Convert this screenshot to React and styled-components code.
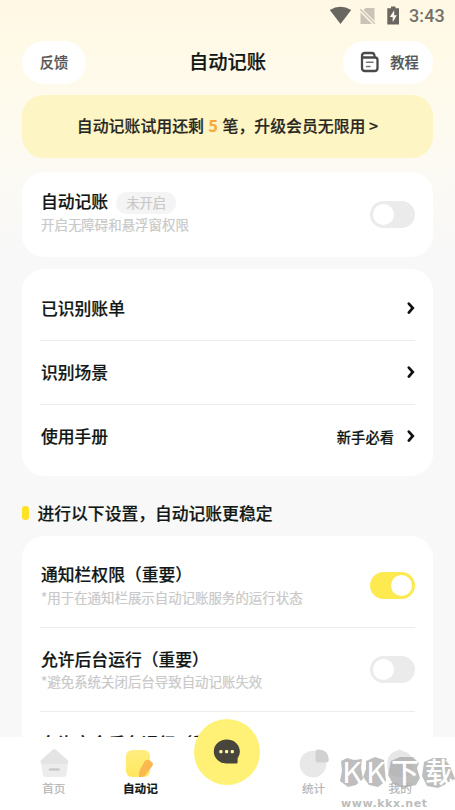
import React from "react";
import styled, { createGlobalStyle } from "styled-components";

const Colors = {
  background: "#f8f8f8",
  text: "#111714",
  muted: "#c9c9c9",
  divider: "#ececec",
  yellow: "#fdea50",
  switchOff: "#ebebeb"
};

const GlobalStyle = createGlobalStyle`
  * {
    box-sizing: border-box;
  }
  body {
    margin: 0;
    font-family: "Noto Sans CJK SC", "Noto Sans", sans-serif;
    color: ${Colors.text};
    -webkit-text-stroke: 0.2px currentColor;
  }
`;

const Screen = styled.div`
  position: relative;
  display: flex;
  flex-direction: column;
  width: 455px;
  height: 810px;
  overflow: hidden;
  background: linear-gradient(#fff8e4 0, #fffaea 75px, #fcfaf3 165px, ${Colors.background} 255px);
`;

const StatusBar = styled.div`
  display: flex;
  align-items: center;
  justify-content: flex-end;
  flex: none;
  height: 31px;
  padding-right: 10px;
`;
const Clock = styled.span`
  margin-left: 8px;
  font: 500 18px/30px Roboto, sans-serif;
  letter-spacing: 0.15px;
  color: #74716b;
  -webkit-text-stroke: 0;
`;

const Header = styled.header`
  display: grid;
  grid-template-columns: 1fr auto 1fr;
  align-items: center;
  flex: none;
  height: 43px;
  margin: 10px 22px 11px;
`;
const HeaderTitle = styled.h1`
  margin: 0;
  font-size: 19.3px;
  font-weight: 500;
  line-height: 38px;
  padding-bottom: 4px;
`;
const PillButton = styled.button`
  display: flex;
  align-items: center;
  justify-content: center;
  justify-self: ${props => props.$align};
  gap: 10px;
  width: ${props => props.$width}px;
  height: 43px;
  padding: 0 0 1px ${props => props.$indent || 0}px;
  border: 0;
  border-radius: 22px;
  background: #fff;
  color: #555;
  font: 500 14.3px/20px "Noto Sans CJK SC", sans-serif;
`;

const Content = styled.main`
  display: flex;
  flex-direction: column;
  flex: 1;
  min-height: 0;
  overflow: hidden;
  padding: 0 22px;
`;
const Banner = styled.div`
  flex: none;
  height: 63px;
  border-radius: 21px;
  background: #fef5c5;
  color: #29271e;
  text-align: center;
  white-space: nowrap;
  font-size: 15.9px;
  font-weight: 500;
  line-height: 62px;
`;
const Count = styled.span`
  margin: 0 1px;
  font-weight: 700;
  color: #f6ab3c;
`;

const Card = styled.section`
  flex: none;
  margin-top: ${props => props.$top}px;
  padding: ${props => props.$padding || "7px 18px 8px"};
  border-radius: 22px;
  background: #fff;
`;
const Row = styled.div`
  display: flex;
  align-items: center;
  justify-content: space-between;
  height: ${props => props.$height}px;
  & + & {
    border-top: 1px solid ${Colors.divider};
  }
`;
const RowText = styled.div`
  display: flex;
  flex-direction: column;
  padding: 0 0 ${props => props.$lift || 0}px 1px;
`;
const RowTitle = styled.div`
  display: flex;
  align-items: center;
  gap: 8px;
  height: 25px;
  font-size: 16.8px;
  font-weight: 500;
  white-space: nowrap;
`;
const RowHint = styled.div`
  font-size: 13.45px;
  line-height: 20px;
  color: ${Colors.muted};
  white-space: nowrap;
`;
const Badge = styled.span`
  width: 60px;
  margin-top: 3px;
  border-radius: 11px;
  background: #f4f4f4;
  color: ${Colors.muted};
  font-size: 13.3px;
  font-weight: 400;
  line-height: 22px;
  text-align: center;
`;
const RowEnd = styled.div`
  display: flex;
  align-items: center;
  gap: 12px;
  padding-bottom: 1px;
  font-size: 14.3px;
  font-weight: 500;
`;
const Track = styled.div`
  display: flex;
  align-items: center;
  justify-content: ${props => (props.$on ? "flex-end" : "flex-start")};
  width: 45px;
  height: 27px;
  padding: 0 3px;
  border-radius: 14px;
  background: ${props => (props.$on ? Colors.yellow : Colors.switchOff)};
`;
const Thumb = styled.div`
  width: 21px;
  height: 21px;
  border-radius: 50%;
  background: #fff;
`;

const SectionTitle = styled.h2`
  display: flex;
  align-items: center;
  flex: none;
  gap: 8.5px;
  height: 24px;
  margin: 25px 0 0;
  font-size: 16.8px;
  font-weight: 500;
  white-space: nowrap;
  &::before {
    content: "";
    width: 7px;
    height: 14px;
    border-radius: 3px;
    background: #fee228;
  }
`;

const TabBar = styled.nav`
  display: grid;
  grid-template-columns: repeat(5, 86.6px);
  justify-content: center;
  flex: none;
  height: 73px;
  padding-right: 1px;
  background: #fff;
`;
const Tab = styled.div`
  display: flex;
  flex-direction: column;
  align-items: center;
  padding-top: 10px;
  font-size: 11.6px;
  line-height: 18px;
  font-weight: ${props => (props.$active ? 700 : 400)};
  color: ${props => (props.$active ? Colors.text : "#b5b5b5")};
`;
const TabIcon = styled.svg`
  width: 32px;
  height: 32px;
`;
const ChatButton = styled.div`
  display: flex;
  align-items: center;
  justify-content: center;
  justify-self: center;
  width: 66px;
  height: 66px;
  margin-top: -18px;
  border-radius: 50%;
  background: #fff176;
`;

const Watermark = styled.svg`
  position: absolute;
  right: 0;
  bottom: 0;
  -webkit-text-stroke: 0;
`;

const Switch = ({ on }) => (
  <Track $on={on}>
    <Thumb />
  </Track>
);

const Chevron = () => (
  <svg width="9" height="14" viewBox="0 0 9 14" fill="none">
    <path d="M2.8 2.6 6.8 7 2.8 11.6" stroke="#111" strokeWidth="2.7" strokeLinecap="round" />
  </svg>
);

const StatusIcons = () => (
  <svg width="72" height="22" viewBox="330 4 72 22">
    <path d="M330.8 9.1Q341.5 2.4 352.2 9.1L341.5 23Z" fill="#696660" />
    <path d="M366.5 7H375.5V20L364.6 9ZM361.5 11.5 373 23H361.5Z" fill="#c9c4b7" />
    <path d="M361.3 8.2 375.8 22.8" stroke="#c9c4b7" strokeWidth="1.5" />
    <path d="M392 5.5H396.5V7.3H400V23.6H388.3V7.3H392Z" fill="#696660" />
    <path d="M395.2 9.2 390.8 16H393.7V21.2L397.8 14.3H395.2Z" fill="#fff9e7" />
  </svg>
);

const GuideIcon = () => (
  <svg width="20" height="22" viewBox="0 0 20 22" fill="none" stroke="#4a4a4a" strokeLinecap="round">
    <path d="M2 5V17Q2 20 5 20H14.5Q17.5 20 17.5 17V9Q17.5 6.5 15 6.5H4.5Q2 6.5 2 4.5Q2 2 5 2H12Q14 2 14.5 4.5L15 6.5" strokeWidth="2.3" />
    <path d="M6.5 11.2H13M6.5 15.5H10" strokeWidth="1.6" stroke="#777" />
  </svg>
);

const HomeIcon = () => (
  <TabIcon viewBox="0 0 32 32">
    <path d="M3 16H30L28.6 27Q28.2 30 25.5 30H8Q5 30 4.6 27Z" fill="#ececec" />
    <path d="M14.3 3Q16.2 1.4 18.2 3L29.5 13Q31.5 15.5 28 17H4.8Q1 15.5 3.2 13Z" fill="#e4e4e4" />
    <path d="M12 22.5H20.5" stroke="#c9c9c9" strokeWidth="2.5" strokeLinecap="round" />
  </TabIcon>
);

const RecordIcon = () => (
  <TabIcon viewBox="0 0 32 32">
    <rect x="2" y="3" width="24" height="27" rx="6" fill="url(#note)" />
    <path d="M20.5 14.5Q22.5 11.5 25.5 13.3L27.5 14.8Q30 16.8 28 19.5L21 28.5Q19.5 30 15 30Q15 26 15.6 23.5Z" fill="#fcb850" />
    <defs>
      <linearGradient id="note" x2="0" y2="1">
        <stop stopColor="#ffee80" />
        <stop offset="1" stopColor="#ffe85e" />
      </linearGradient>
    </defs>
  </TabIcon>
);

const StatsIcon = () => (
  <TabIcon viewBox="0 0 32 32">
    <circle cx="15" cy="17" r="13.3" fill="#e8e8e8" />
    <path d="M17.5 5Q17.5 2.2 20.5 2.5Q30.5 3 30.8 12.5Q30.8 15.5 28 15.5H20Q17.5 15.5 17.5 13Z" fill="#d1d1d1" />
  </TabIcon>
);

const MineIcon = () => (
  <TabIcon viewBox="0 0 32 32">
    <path d="M14 3.5Q16 1 18 4Q27 5 28.5 14V22Q27 30 16 30Q5 30 3.5 22V14Q5 5 14 3.5Z" fill="#e6e6e6" />
  </TabIcon>
);

const ChatIcon = () => (
  <svg width="28" height="26" viewBox="0 0 28 26">
    <path d="M13.5.5A12.7 12 0 1 0 13.5 24.5H23.5Q24.7 24.5 24.6 23V19.2A12.7 12 0 0 0 13.5.5Z" fill="#48463c" />
    <rect x="6.3" y="11" width="3.2" height="3.2" rx="1" fill="#fff7a0" />
    <rect x="12" y="11" width="3.2" height="3.2" rx="1" fill="#fff7a0" />
    <rect x="17.7" y="11" width="3.2" height="3.2" rx="1" fill="#fff7a0" />
  </svg>
);

const SiteMark = () => (
  <Watermark width="119" height="60" viewBox="336 750 119 60">
    <g fill="#a8a8a8" fillOpacity="0.75">
      <path d="M341 761 347 758 354 760 362 759 361 768 363 779 356 785 348 787 340 781 342 771Z" />
      <path d="M366 761 375 757 384 760 385 772 386 781 378 787 369 785 363 777 366 769Z" />
      <path d="M391 761 400 757 413 757 419 763 417 768 420 778 416 785 403 788 393 784 388 775Z" />
      <path d="M424 762 433 758 446 758 450 766 455 779 446 784 438 788 427 786 422 776Z" />
    </g>
    <g fill="#fff" fontFamily="Noto Sans CJK SC, sans-serif" fontWeight="400">
      <text x="342" y="783" fontSize="29" textLength="20" lengthAdjust="spacingAndGlyphs">K</text>
      <text x="366" y="783" fontSize="29" textLength="20" lengthAdjust="spacingAndGlyphs">K</text>
      <text x="391" y="783" fontSize="28" fontWeight="500">下</text>
      <text x="425" y="783" fontSize="28" fontWeight="500">载</text>
    </g>
    <text x="341" y="807" fontSize="11" fontFamily="DejaVu Sans, sans-serif" fontWeight="700" fill="#bdbdbd" textLength="86">
      www.kkx.net
    </text>
  </Watermark>
);

const links = [
  { title: "已识别账单" },
  { title: "识别场景" },
  { title: "使用手册", note: "新手必看" }
];

const settings = [
  { title: "通知栏权限（重要）", hint: "*用于在通知栏展示自动记账服务的运行状态", on: true },
  { title: "允许后台运行（重要）", hint: "*避免系统关闭后台导致自动记账失效" },
  { title: "允许完全后台运行（重要）" }
];

export default function App() {
  return (
    <Screen>
      <GlobalStyle />
      <StatusBar>
        <StatusIcons />
        <Clock>3:43</Clock>
      </StatusBar>
      <Header>
        <PillButton $align="start" $width={64}>反馈</PillButton>
        <HeaderTitle>自动记账</HeaderTitle>
        <PillButton $align="end" $width={90} $indent={3}>
          <GuideIcon />
          教程
        </PillButton>
      </Header>
      <Content>
        <Banner>
          自动记账试用还剩 <Count>5</Count> 笔，升级会员无限用 &gt;
        </Banner>
        <Card $top={14} $padding="0 18px">
          <Row $height={85}>
            <RowText $lift={7}>
              <RowTitle>
                自动记账
                <Badge>未开启</Badge>
              </RowTitle>
              <RowHint>开启无障碍和悬浮窗权限</RowHint>
            </RowText>
            <Switch />
          </Row>
        </Card>
        <Card $top={12}>
          {links.map(({ title, note }) => (
            <Row key={title} $height={64}>
              <RowText $lift={1}>
                <RowTitle>{title}</RowTitle>
              </RowText>
              <RowEnd>
                {note}
                <Chevron />
              </RowEnd>
            </Row>
          ))}
        </Card>
        <SectionTitle>进行以下设置，自动记账更稳定</SectionTitle>
        <Card $top={11}>
          {settings.map(({ title, hint, on }) => (
            <Row key={title} $height={84}>
              <RowText $lift={2}>
                <RowTitle>{title}</RowTitle>
                <RowHint>{hint || "\u00a0"}</RowHint>
              </RowText>
              <Switch on={on} />
            </Row>
          ))}
        </Card>
      </Content>
      <TabBar>
        <Tab>
          <HomeIcon />
          首页
        </Tab>
        <Tab $active>
          <RecordIcon />
          自动记
        </Tab>
        <ChatButton>
          <ChatIcon />
        </ChatButton>
        <Tab>
          <StatsIcon />
          统计
        </Tab>
        <Tab>
          <MineIcon />
          我的
        </Tab>
      </TabBar>
      <SiteMark />
    </Screen>
  );
}
